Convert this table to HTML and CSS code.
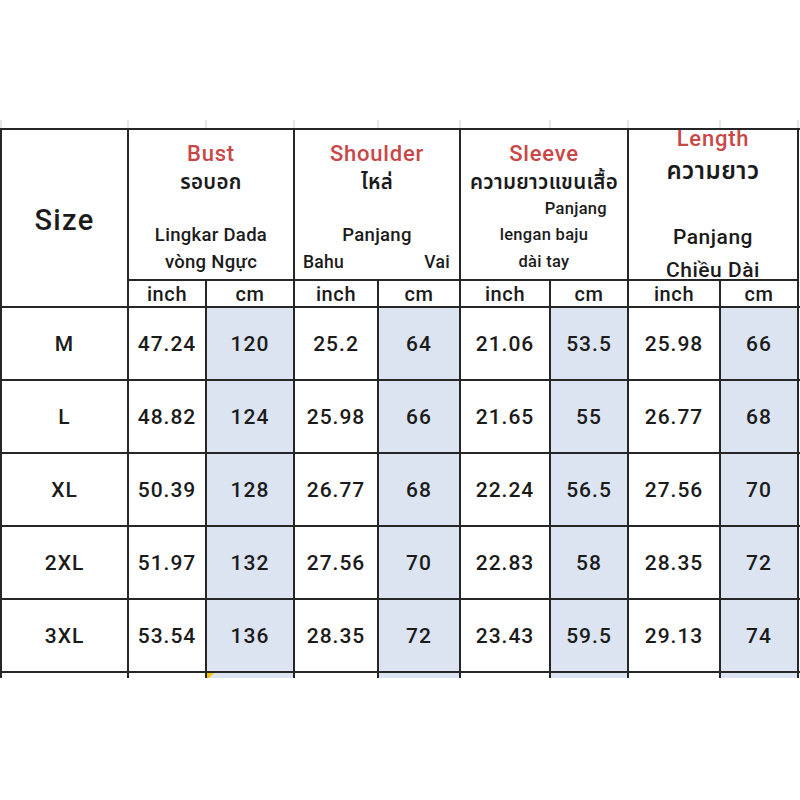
FILE: index.html
```html
<!DOCTYPE html>
<html lang="th">
<head>
<meta charset="utf-8">
<title>Size chart</title>
<link rel="stylesheet" href="styles.css">
</head>
<body>
<div class="blank"></div>
<div class="ghost">
  <div></div><div></div><div></div><div></div><div></div><div></div><div></div><div></div><div></div><div></div>
</div>
<div class="sheet">
  <div class="grid">
    <div class="cell size-head">Size</div>
    <div class="cell head span2">
      <div class="title">Bust</div>
      <div class="line th">รอบอก</div>
      <div class="line"></div>
      <div class="line">Lingkar Dada</div>
      <div class="line">vòng Ngực</div>
    </div>
    <div class="cell head span2">
      <div class="title">Shoulder</div>
      <div class="line th">ไหล่</div>
      <div class="line"></div>
      <div class="line">Panjang</div>
      <div class="line split"><span>Bahu</span><span>Vai</span></div>
    </div>
    <div class="cell head span2">
      <div class="title">Sleeve</div>
      <div class="line th">ความยาวแขนเสื้อ</div>
      <div class="line small shift">Panjang</div>
      <div class="line small">lengan baju</div>
      <div class="line small">dài tay</div>
    </div>
    <div class="cell head span2 length">
      <div class="title">Length</div>
      <div class="big th">ความยาว</div>
      <div class="big"></div>
      <div class="big">Panjang</div>
      <div class="big">Chiều Dài</div>
    </div>
    <div class="cell extra tall"></div>

    <div class="cell unit">inch</div><div class="cell unit">cm</div>
    <div class="cell unit">inch</div><div class="cell unit">cm</div>
    <div class="cell unit">inch</div><div class="cell unit">cm</div>
    <div class="cell unit">inch</div><div class="cell unit">cm</div>

    <div class="cell val">M</div>
    <div class="cell val">47.24</div><div class="cell val cm">120</div>
    <div class="cell val">25.2</div><div class="cell val cm">64</div>
    <div class="cell val">21.06</div><div class="cell val cm">53.5</div>
    <div class="cell val">25.98</div><div class="cell val cm">66</div>
    <div class="cell extra"></div>

    <div class="cell val">L</div>
    <div class="cell val">48.82</div><div class="cell val cm">124</div>
    <div class="cell val">25.98</div><div class="cell val cm">66</div>
    <div class="cell val">21.65</div><div class="cell val cm">55</div>
    <div class="cell val">26.77</div><div class="cell val cm">68</div>
    <div class="cell extra"></div>

    <div class="cell val">XL</div>
    <div class="cell val">50.39</div><div class="cell val cm">128</div>
    <div class="cell val">26.77</div><div class="cell val cm">68</div>
    <div class="cell val">22.24</div><div class="cell val cm">56.5</div>
    <div class="cell val">27.56</div><div class="cell val cm">70</div>
    <div class="cell extra"></div>

    <div class="cell val">2XL</div>
    <div class="cell val">51.97</div><div class="cell val cm">132</div>
    <div class="cell val">27.56</div><div class="cell val cm">70</div>
    <div class="cell val">22.83</div><div class="cell val cm">58</div>
    <div class="cell val">28.35</div><div class="cell val cm">72</div>
    <div class="cell extra"></div>

    <div class="cell val">3XL</div>
    <div class="cell val">53.54</div><div class="cell val cm">136</div>
    <div class="cell val">28.35</div><div class="cell val cm">72</div>
    <div class="cell val">23.43</div><div class="cell val cm">59.5</div>
    <div class="cell val">29.13</div><div class="cell val cm">74</div>
    <div class="cell extra"></div>

    <div class="cell val"></div>
    <div class="cell val"></div><div class="cell val cm flag"></div>
    <div class="cell val"></div><div class="cell val cm"></div>
    <div class="cell val"></div><div class="cell val cm"></div>
    <div class="cell val"></div><div class="cell val cm"></div>
    <div class="cell extra"></div>
  </div>
</div>
</body>
</html>
```
FILE: styles.css
```css
html, body {
  margin: 0;
  padding: 0;
  background: #ffffff;
}
body {
  width: 800px;
  height: 800px;
  overflow: hidden;
  font-family: Roboto, "Noto Sans", "Noto Sans Thai", "Tlwg Typo", Loma, Garuda, "DejaVu Sans", sans-serif;
  color: #1b1b1b;
}
.blank {
  height: 120px;
}
.ghost {
  display: grid;
  grid-template-columns: 125px 76px 86px 82px 80px 88px 76px 90px 76px 1fr;
  column-gap: 2px;
  padding-left: 2px;
  height: 8px;
  background: #e6e6e6;
}
.ghost div {
  background: #ffffff;
}
.sheet {
  height: 550px;
  overflow: hidden;
}
.grid {
  display: grid;
  grid-template-columns: 125px 76px 86px 82px 80px 88px 76px 90px 76px 1fr;
  grid-template-rows: 149px 25px repeat(6, 71px);
  gap: 2px;
  padding: 2px 0 0 2px;
  background: #262626;
}
.cell {
  background: #ffffff;
  position: relative;
  overflow: hidden;
}
.extra.tall {
  grid-row: 1 / 3;
  grid-column: 10;
}
.size-head {
  grid-row: 1 / 3;
  grid-column: 1;
  display: flex;
  align-items: center;
  justify-content: center;
  font-size: 29px;
  font-weight: 500;
  letter-spacing: 1.3px;
  padding-top: 4px;
}
.head {
  grid-row: 1;
  display: flex;
  flex-direction: column;
  align-items: center;
  padding-top: 9px;
  font-weight: 500;
}
.span2 {
  grid-column: span 2;
}
.title {
  color: #c94747;
  font-size: 22px;
  line-height: 30px;
  font-weight: 500;
  letter-spacing: 0.8px;
  flex-shrink: 0;
}
.line {
  height: 26.5px;
  line-height: 26.5px;
  font-size: 18.5px;
  letter-spacing: 0.3px;
  white-space: nowrap;
  flex-shrink: 0;
}
.line.th {
  font-size: 20.5px;
  font-weight: 600;
}
.line.small {
  font-size: 16.5px;
}
.line.shift {
  align-self: flex-end;
  padding-right: 20px;
}
.line.split {
  align-self: stretch;
  display: flex;
  justify-content: space-between;
  padding: 0 9px 0 8px;
  font-size: 17.5px;
}
.head.length {
  padding-top: 0;
  justify-content: center;
}
.length .title {
  line-height: 33px;
  height: 33px;
}
.big {
  height: 33px;
  line-height: 33px;
  font-size: 21px;
  letter-spacing: 0.5px;
  white-space: nowrap;
  flex-shrink: 0;
}
.big.th {
  font-size: 24px;
  font-weight: 600;
}
.unit {
  display: flex;
  align-items: center;
  justify-content: center;
  font-size: 20px;
  font-weight: 500;
  letter-spacing: 0.6px;
}
.val {
  display: flex;
  align-items: center;
  justify-content: center;
  font-size: 21px;
  font-weight: 500;
  letter-spacing: 1px;
}
.cm {
  background: #dbe4f0;
}
.flag::before {
  content: "";
  position: absolute;
  left: 0;
  top: 0;
  border-top: 7px solid #f5c400;
  border-right: 7px solid transparent;
}
```
